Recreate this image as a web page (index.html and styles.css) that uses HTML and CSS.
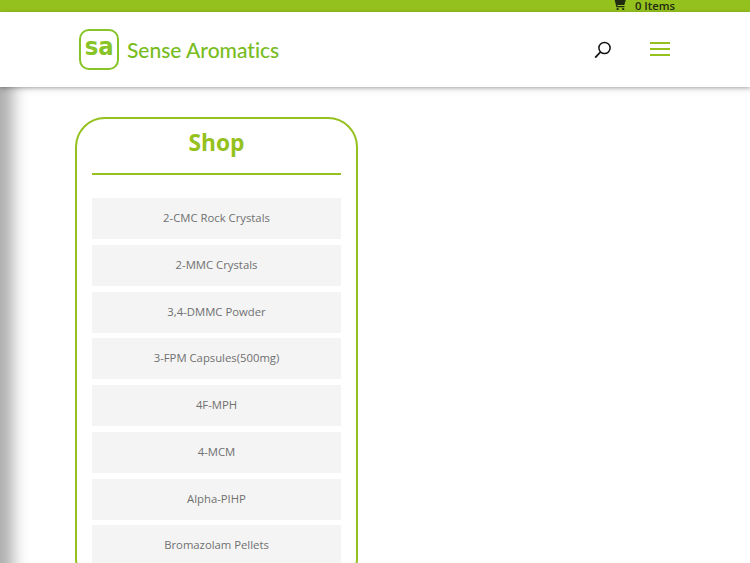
FILE: index.html
```html
<!DOCTYPE html>
<html lang="en">

<head>
    <meta charset="UTF-8">
    <meta name="viewport" content="width=device-width, initial-scale=1.0">
    <title>Sense Aromatics</title>
    <link rel="stylesheet" href="styles.css">
</head>

<body>

    <div class="top-bar">
        <a class="cart" href="#">
            <svg class="cart-icon" width="13" height="12" viewBox="0 0 13 12">
                <path d="M0 0.5h2.4l0.5 1.5h9.8l-1.4 5H4.2l0.3 1h7v1.2H3.4L1.6 1.7H0z" fill="#1f2a10"/>
                <circle cx="4.6" cy="11" r="1.1" fill="#1f2a10"/>
                <circle cx="10.2" cy="11" r="1.1" fill="#1f2a10"/>
            </svg>
            <span>0 Items</span>
        </a>
    </div>

    <header class="main-header">
        <a class="logo" href="#">
            <span class="logo-mark"><span class="logo-letters">sa</span></span>
            <span class="logo-text">Sense Aromatics</span>
        </a>
        <div class="header-icons">
            <svg class="search-icon" width="18" height="18" viewBox="0 0 18 18">
                <circle cx="10.5" cy="7" r="5.6" fill="none" stroke="#111" stroke-width="1.5"/>
                <path d="M6.5 11L1.2 16.6" stroke="#111" stroke-width="1.8" fill="none"/>
            </svg>
            <div class="menu-icon">
                <span></span>
                <span></span>
                <span></span>
            </div>
        </div>
    </header>

    <main class="content">
        <aside class="shop-box">
            <h2 class="shop-title">Shop</h2>
            <ul class="shop-list">
                <li><a href="#">2-CMC Rock Crystals</a></li>
                <li><a href="#">2-MMC Crystals</a></li>
                <li><a href="#">3,4-DMMC Powder</a></li>
                <li><a href="#">3-FPM Capsules(500mg)</a></li>
                <li><a href="#">4F-MPH</a></li>
                <li><a href="#">4-MCM</a></li>
                <li><a href="#">Alpha-PIHP</a></li>
                <li><a href="#">Bromazolam Pellets</a></li>
            </ul>
        </aside>
    </main>

</body>

</html>
```

FILE: styles.css
```css
html,
body {
    margin: 0;
    height: 563px;
    overflow: hidden;
}

body {
    font-family: "Open Sans", Arial, sans-serif;
    background-color: #fff;
    color: #666;
}

a {
    text-decoration: none;
    color: inherit;
}

.top-bar {
    height: 12px;
    background-color: #95c11f;
    display: flex;
    justify-content: flex-end;
    padding-right: 75px;
}

.cart {
    display: flex;
    align-items: center;
    gap: 9px;
    height: 12px;
    font-size: 11.3px;
    font-weight: 600;
    color: #1f2a10;
    line-height: 12px;
}

.cart-icon {
    margin-top: -5px;
}

.main-header {
    height: 75px;
    background-color: #fff;
    box-shadow: 0 1px 4px rgba(0, 0, 0, 0.3);
    display: flex;
    align-items: center;
    justify-content: space-between;
    padding: 0 80px 0 79px;
    position: relative;
}

.logo {
    display: flex;
    align-items: center;
    gap: 8px;
}

.logo-mark {
    width: 36px;
    height: 37px;
    border: 2px solid #86c427;
    border-radius: 10px;
    display: flex;
    align-items: center;
    justify-content: center;
}

.logo-letters {
    font-family: "DejaVu Sans", sans-serif;
    font-weight: bold;
    font-size: 24px;
    line-height: 30px;
    color: #86c427;
    transform: scaleX(0.95);
    margin-top: -5px;
}

.logo-text {
    font-family: Lato, sans-serif;
    font-size: 21px;
    font-weight: 500;
    font-variant-ligatures: none;
    color: #78bc1e;
}

.header-icons {
    display: flex;
    align-items: center;
    gap: 38px;
}

.menu-icon {
    width: 20px;
    display: flex;
    flex-direction: column;
    gap: 4px;
    margin-top: -2px;
}

.menu-icon span {
    display: block;
    height: 2px;
    background-color: #95c11f;
}

.content {
    height: 476px;
    padding: 30px 0 0 75px;
    box-sizing: border-box;
    box-shadow: inset 27px 0 16px -14px rgba(0, 0, 0, 0.32), inset 0 10px 10px -8px rgba(0, 0, 0, 0.08);
}

.shop-box {
    width: 283px;
    box-sizing: border-box;
    border: 2px solid #95c11f;
    border-radius: 30px;
    padding: 0 15px 20px;
}

.shop-title {
    margin: 0;
    height: 54px;
    line-height: 47px;
    font-size: 22.8px;
    font-weight: 700;
    text-align: center;
    color: #95c11f;
    border-bottom: 2px solid #95c11f;
}

.shop-list {
    list-style: none;
    margin: 23px 0 0;
    padding: 0;
    display: flex;
    flex-direction: column;
    gap: 5.75px;
}

.shop-list a {
    display: block;
    height: 41px;
    line-height: 39px;
    background-color: #f4f4f4;
    font-size: 11.3px;
    text-align: center;
    color: #707070;
}
```
